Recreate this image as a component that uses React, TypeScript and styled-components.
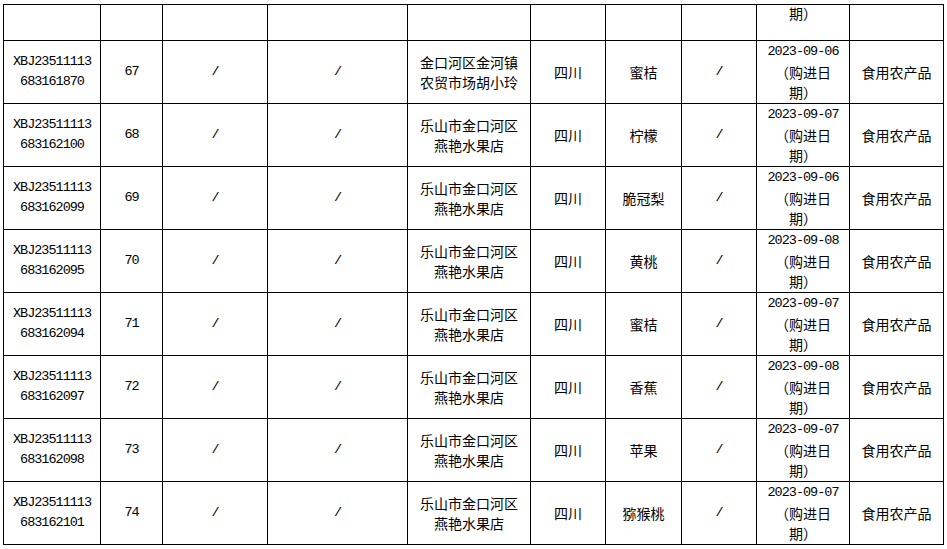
import styled, { createGlobalStyle } from "styled-components";

const GlobalStyle = createGlobalStyle`
  html, body {
    margin: 0;
    padding: 0;
    background: #fff;
  }
  body {
    font-family: "Noto Sans CJK SC", "Liberation Sans", sans-serif;
    color: #000;
  }
`;

const Page = styled.div`
  padding: 4px 0 0 3px;
  overflow: hidden;
`;

const Table = styled.table`
  border-collapse: collapse;
  table-layout: fixed;
  width: 940px;
`;

const HeadRow = styled.tr`
  height: 36px;
`;

const Row = styled.tr`
  height: 63px;
`;

const Cell = styled.td<{ $top?: boolean }>`
  border: 1px solid #000;
  padding: 0;
  text-align: center;
  vertical-align: ${(p) => (p.$top ? "top" : "middle")};
  font-size: 14px;
  line-height: ${(p) => (p.$top ? "16px" : "20px")};
  white-space: nowrap;
  overflow: hidden;
`;

const Line = styled.div<{ $latin?: boolean }>`
  height: 20px;
  line-height: 20px;
  ${(p) =>
    p.$latin &&
    `
    font-family: "Liberation Mono", "DejaVu Sans Mono", monospace;
    font-size: 13.5px;
    letter-spacing: -1px;
  `}
`;

const widths = [97, 62, 105, 140, 123, 75, 76, 75, 93, 94];

type Item = {
  code: string;
  no: number;
  shop: [string, string];
  fruit: string;
  date: string;
};

const shopA: [string, string] = ["乐山市金口河区", "燕艳水果店"];

const items: Item[] = [
  { code: "683161870", no: 67, shop: ["金口河区金河镇", "农贸市场胡小玲"], fruit: "蜜桔", date: "2023-09-06" },
  { code: "683162100", no: 68, shop: shopA, fruit: "柠檬", date: "2023-09-07" },
  { code: "683162099", no: 69, shop: shopA, fruit: "脆冠梨", date: "2023-09-06" },
  { code: "683162095", no: 70, shop: shopA, fruit: "黄桃", date: "2023-09-08" },
  { code: "683162094", no: 71, shop: shopA, fruit: "蜜桔", date: "2023-09-07" },
  { code: "683162097", no: 72, shop: shopA, fruit: "香蕉", date: "2023-09-08" },
  { code: "683162098", no: 73, shop: shopA, fruit: "苹果", date: "2023-09-07" },
  { code: "683162101", no: 74, shop: shopA, fruit: "猕猴桃", date: "2023-09-07" },
];

export default function App() {
  return (
    <Page>
      <GlobalStyle />
      <Table>
        <colgroup>
          {widths.map((w, i) => (
            <col key={i} style={{ width: w }} />
          ))}
        </colgroup>
        <tbody>
          <HeadRow>
            {widths.map((_, i) => (
              <Cell key={i} $top={i === 8}>
                {i === 8 ? "期）" : null}
              </Cell>
            ))}
          </HeadRow>
          {items.map((it) => (
            <Row key={it.no}>
              <Cell>
                <Line $latin>XBJ23511113</Line>
                <Line $latin>{it.code}</Line>
              </Cell>
              <Cell>
                <Line $latin>{it.no}</Line>
              </Cell>
              <Cell>
                <Line $latin>/</Line>
              </Cell>
              <Cell>
                <Line $latin>/</Line>
              </Cell>
              <Cell>
                <Line>{it.shop[0]}</Line>
                <Line>{it.shop[1]}</Line>
              </Cell>
              <Cell>
                <Line>四川</Line>
              </Cell>
              <Cell>
                <Line>{it.fruit}</Line>
              </Cell>
              <Cell>
                <Line $latin>/</Line>
              </Cell>
              <Cell>
                <Line $latin>{it.date}</Line>
                <Line>（购进日</Line>
                <Line>期）</Line>
              </Cell>
              <Cell>
                <Line>食用农产品</Line>
              </Cell>
            </Row>
          ))}
        </tbody>
      </Table>
    </Page>
  );
}
